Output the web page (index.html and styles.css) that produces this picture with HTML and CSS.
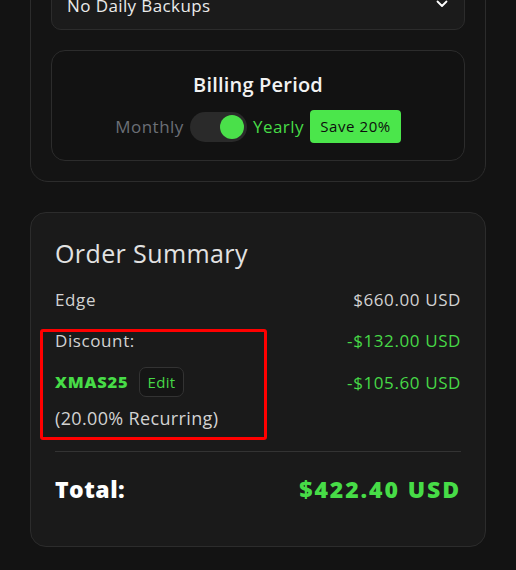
FILE: index.html
```html
<!DOCTYPE html>
<html lang="en">
<head>
<meta charset="utf-8">
<title>Checkout</title>
<link rel="stylesheet" href="styles.css">
</head>
<body>
<main class="page">
  <section class="config-card">
    <div class="select">
      <span class="select-text">No Daily Backups</span>
      <svg class="chevron" width="12" height="8" viewBox="0 0 12 8" aria-hidden="true"><path d="M1.5 1.5 L6 6 L10.5 1.5" fill="none" stroke="#ffffff" stroke-width="1.8" stroke-linecap="round" stroke-linejoin="round"/></svg>
    </div>
    <div class="billing">
      <h3 class="billing-title">Billing Period</h3>
      <div class="billing-row">
        <span class="period period-off">Monthly</span>
        <span class="toggle"><span class="knob"></span></span>
        <span class="period period-on">Yearly</span>
        <span class="badge">Save 20%</span>
      </div>
    </div>
  </section>

  <section class="summary-card">
    <h2 class="summary-title">Order Summary</h2>
    <div class="line-row">
      <span class="label">Edge</span>
      <span class="amount">$660.00 USD</span>
    </div>
    <div class="discount">
      <div class="discount-left">
        <div class="label d-line">Discount:</div>
        <div class="code-line">
          <span class="code">XMAS25</span>
          <button class="edit">Edit</button>
        </div>
        <div class="recurring">(20.00% Recurring)</div>
      </div>
      <div class="discount-right">
        <div class="amount green d-line">-$132.00 USD</div>
        <div class="amount green code-amt">-$105.60 USD</div>
      </div>
    </div>
    <div class="divider"></div>
    <div class="total-row">
      <span class="total-label">Total:</span>
      <span class="total-amount">$422.40 USD</span>
    </div>
  </section>
</main>
</body>
</html>
```
FILE: styles.css
```css
*, *::before, *::after { box-sizing: border-box; }
html, body { margin: 0; padding: 0; }
body {
  background: #131313;
  font-family: "Open Sans", "Noto Sans", sans-serif;
  color: #d4d4d4;
  width: 516px;
  height: 570px;
  overflow: hidden;
}
.page {
  padding: 0 30px;
  margin-top: -41px;
}
.config-card {
  border: 1px solid #2c2c2c;
  border-radius: 18px;
  background: #141414;
  padding: 20px;
  display: flex;
  flex-direction: column;
  gap: 20px;
}
.select {
  height: 50px;
  background: #1b1b1b;
  border: 1px solid #2c2c2c;
  border-radius: 10px;
  display: flex;
  align-items: center;
  justify-content: space-between;
  padding: 0 16px 0 15px;
  color: #eaeaea;
  font-size: 17px;
  letter-spacing: 0.4px;
}
.chevron { margin-top: -2px; }
.billing {
  height: 111px;
  border: 1px solid #2c2c2c;
  border-radius: 14px;
  background: #121212;
  display: flex;
  flex-direction: column;
  align-items: center;
  padding-top: 20px;
}
.billing-title {
  margin: 0;
  font-size: 20px;
  font-weight: 600;
  line-height: 28px;
  color: #f2f2f2;
  letter-spacing: 0.2px;
}
.billing-row {
  margin-top: 11px;
  display: flex;
  align-items: center;
  gap: 6px;
  font-size: 17px;
  letter-spacing: 0.5px;
}
.period-off { color: #6b6f76; }
.period-on { color: #47dc47; font-weight: 500; }
.toggle {
  width: 57px;
  height: 30px;
  border-radius: 15px;
  background: #2a2a2a;
  display: flex;
  align-items: center;
  justify-content: flex-end;
  padding: 0 3px;
}
.knob {
  width: 24px;
  height: 24px;
  border-radius: 50%;
  background: #4ae04a;
}
.badge {
  background: #4be64b;
  color: #0d0d0d;
  font-size: 15px;
  letter-spacing: 0.6px;
  border-radius: 4px;
  padding: 0 10px;
  height: 33px;
  line-height: 33px;
}
.summary-card {
  margin-top: 30px;
  border: 1px solid #2c2c2c;
  border-radius: 16px;
  background: #1a1a1a;
  padding: 22px 24px 0 24px;
  height: 335px;
}
.summary-title {
  margin: 0;
  font-size: 25px;
  font-weight: 500;
  line-height: 36px;
  color: #e2e2e2;
  letter-spacing: 0.4px;
}
.line-row {
  margin-top: 17px;
  display: flex;
  justify-content: space-between;
  line-height: 24px;
  font-size: 17px;
  letter-spacing: 0.6px;
}
.label { color: #d2d2d2; }
.amount { color: #d2d2d2; }
.green { color: #47d847; }
.discount {
  margin-top: 17px;
  display: flex;
  justify-content: space-between;
  font-size: 17px;
  line-height: 24px;
  letter-spacing: 0.6px;
}
.discount-left { position: relative; }
.discount-left::after {
  content: "";
  position: absolute;
  left: -15px;
  top: 0;
  width: 227px;
  height: 111px;
  border: 3px solid #ff0000;
  border-radius: 3px;
}
.code-line {
  margin-top: 14px;
  display: flex;
  align-items: center;
  gap: 10px;
  height: 30px;
}
.code {
  color: #47dc47;
  font-weight: 800;
  font-size: 16.5px;
  letter-spacing: 0.8px;
}
.edit {
  font-family: inherit;
  font-size: 15px;
  letter-spacing: 0.3px;
  color: #47d847;
  background: #151515;
  border: 1px solid #333333;
  border-radius: 7px;
  height: 30px;
  padding: 0 8px;
  cursor: pointer;
}
.recurring {
  margin-top: 8px;
  font-size: 18px;
  line-height: 27px;
  color: #d2d2d2;
  letter-spacing: 0.35px;
}
.code-amt { margin-top: 18px; }
.divider {
  margin-top: 19px;
  height: 1px;
  background: #333333;
}
.total-row {
  margin-top: 22px;
  display: flex;
  justify-content: space-between;
  align-items: center;
  line-height: 30px;
}
.total-label {
  font-size: 23px;
  font-weight: 800;
  color: #ffffff;
  letter-spacing: 0.5px;
}
.total-amount {
  font-size: 23px;
  font-weight: 800;
  color: #47dc47;
  letter-spacing: 1.9px;
}
```
